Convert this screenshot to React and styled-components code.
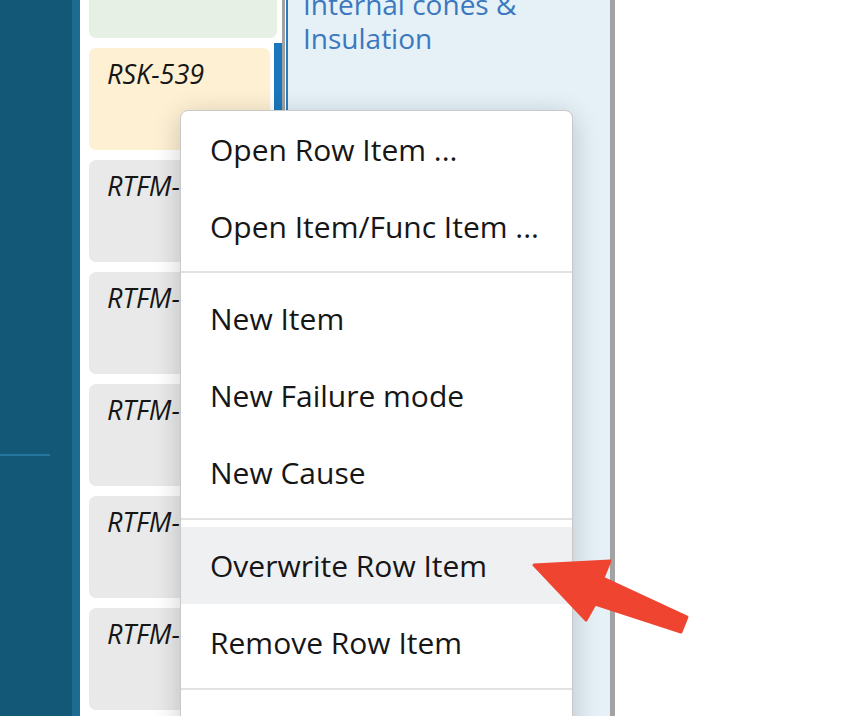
import React from 'react';
import styled, { createGlobalStyle } from 'styled-components';

const GlobalStyle = createGlobalStyle`
    html, body {
        margin: 0;
        padding: 0;
        background: #ffffff;
        font-family: "Open Sans", "Noto Sans", sans-serif;
    }
`;

const rows = [
    { id: 'g', label: '', tone: 'green' },
    { id: 'rsk', label: 'RSK-539', tone: 'yellow', selected: true },
    { id: 'r1', label: 'RTFM-', tone: 'gray' },
    { id: 'r2', label: 'RTFM-', tone: 'gray' },
    { id: 'r3', label: 'RTFM-', tone: 'gray' },
    { id: 'r4', label: 'RTFM-', tone: 'gray' },
    { id: 'r5', label: 'RTFM-', tone: 'gray' },
];

const menuGroups = [
    ['Open Row Item ...', 'Open Item/Func Item ...'],
    ['New Item', 'New Failure mode', 'New Cause'],
    ['Overwrite Row Item', 'Remove Row Item'],
];

const tones = {
    green: '#e7f0e5',
    yellow: '#fdf0d3',
    gray: '#e9e9e9',
};

function App() {
    return (
        <Screen>
            <GlobalStyle />
            <Sidebar>
                <SidebarRule />
            </Sidebar>

            <CardColumn>
                <CardList>
                    {rows.map((row) => (
                        <Row key={row.id}>
                            <Card $tone={row.tone} $selected={row.selected}>
                                {row.label}
                            </Card>
                            {row.selected && <SelectBar />}
                        </Row>
                    ))}
                </CardList>
            </CardColumn>

            <DetailPanel>
                <PanelTitle>Internal cones &amp; Insulation</PanelTitle>
            </DetailPanel>

            <ContextMenu>
                {menuGroups.map((group, gi) => (
                    <MenuGroup key={gi} $first={gi === 0}>
                        {group.map((label) => (
                            <MenuItem key={label} $active={label === 'Overwrite Row Item'}>
                                {label}
                            </MenuItem>
                        ))}
                    </MenuGroup>
                ))}
                <MenuGroup>
                    <MenuItem />
                </MenuGroup>
            </ContextMenu>

            <Pointer viewBox="520 550 180 95" width="180" height="95">
                <polygon
                    points="534,565 610,561 603,578 687,617 681,632 595,604 586,620"
                    fill="#ee4430"
                    stroke="#ee4430"
                    strokeWidth="3"
                    strokeLinejoin="round"
                />
            </Pointer>
        </Screen>
    );
}

export default App;

const Screen = styled.div`
    position: relative;
    display: flex;
    width: 844px;
    height: 716px;
    overflow: hidden;
    background: #ffffff;
`;

const Sidebar = styled.div`
    width: 72px;
    flex-shrink: 0;
    background: #145877;
    border-right: 8px solid #1c6c90;
    padding-top: 454px;
`;

const SidebarRule = styled.div`
    width: 50px;
    height: 2px;
    background: #23769c;
`;

const CardColumn = styled.div`
    width: 193px;
    flex-shrink: 0;
    padding-left: 9px;
    border-right: 3px solid #a2a2a2;
    overflow: hidden;
`;

const CardList = styled.div`
    display: flex;
    flex-direction: column;
    margin-top: -69px;
`;

const Row = styled.div`
    display: flex;
    height: 112px;
`;

const Card = styled.div`
    flex: 1;
    margin: 5px ${(p) => (p.$selected ? '4px' : '5px')} 5px 0;
    padding: 8px 18px;
    border-radius: 7px;
    background: ${(p) => tones[p.$tone]};
    font-style: italic;
    font-size: 27px;
    line-height: 1.3;
    color: #161616;
    white-space: nowrap;
    overflow: hidden;
`;

const SelectBar = styled.div`
    width: 8px;
    background: #1a77bb;
`;

const DetailPanel = styled.div`
    width: 307px;
    flex-shrink: 0;
    margin-left: 1px;
    padding-left: 15px;
    background: #e5f0f7;
    border-left: 2px solid #2d7cc0;
    border-right: 5px solid #a3a3a3;
`;

const PanelTitle = styled.div`
    margin-top: -13px;
    font-size: 28px;
    line-height: 34px;
    color: #3b78bf;
    width: 240px;
`;

const ContextMenu = styled.div`
    position: absolute;
    left: 180px;
    top: 110px;
    width: 391px;
    background: #ffffff;
    border: 1px solid #c9c9c9;
    border-radius: 8px;
    box-shadow: 0 6px 28px rgba(0, 0, 0, 0.2);
`;

const MenuGroup = styled.div`
    padding: ${(p) => (p.$first ? '0 0 6px' : '7px 0')};
    border-top: ${(p) => (p.$first ? 'none' : '2px solid #e2e2e2')};
`;

const MenuItem = styled.div`
    height: 77px;
    line-height: 77px;
    padding-left: 29px;
    font-size: 30px;
    color: #161616;
    white-space: nowrap;
    background: ${(p) => (p.$active ? '#eef0f2' : 'transparent')};
`;

const Pointer = styled.svg`
    position: absolute;
    left: 520px;
    top: 550px;
    overflow: visible;
`;
